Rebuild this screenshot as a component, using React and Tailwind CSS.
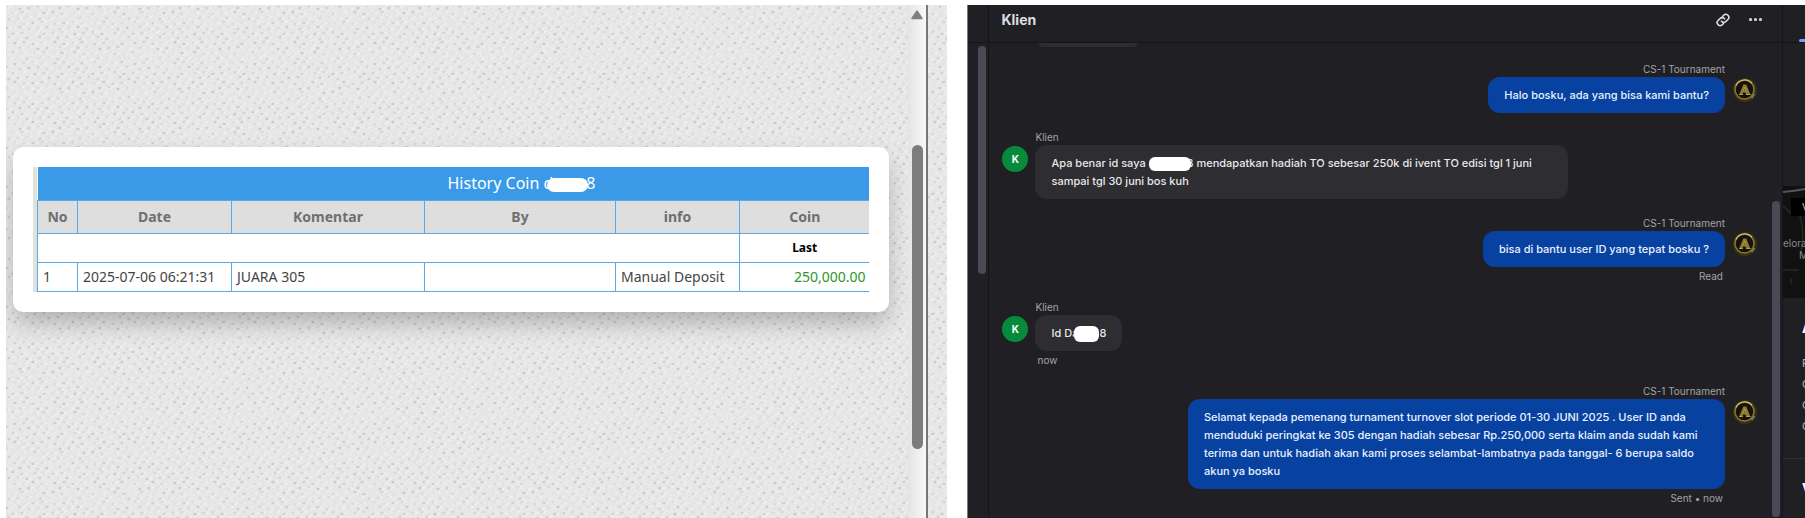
import { clsx } from "clsx";
import { Ellipsis } from "lucide-react";

const columns = ["No", "Date", "Komentar", "By", "info", "Coin"];

const messages = [
  {
    from: "agent",
    name: "CS-1 Tournament",
    body: "Halo bosku, ada yang bisa kami bantu?",
  },
  {
    from: "client",
    name: "Klien",
    body: (
      <>
        Apa benar id saya <Redacted className="w-[42px] h-[14px] -mr-1 rounded-md" />8 mendapatkan hadiah TO sebesar 250k di ivent TO edisi tgl 1 juni sampai tgl 30 juni bos kuh
      </>
    ),
  },
  {
    from: "agent",
    name: "CS-1 Tournament",
    body: "bisa di bantu user ID yang tepat bosku ?",
    status: "Read",
  },
  {
    from: "client",
    name: "Klien",
    body: (
      <>
        Id Da
        <Redacted className="w-[25px] h-4 -my-1 -ml-1 rounded-md" />8
      </>
    ),
    status: "now",
  },
  {
    from: "agent",
    name: "CS-1 Tournament",
    body: "Selamat kepada pemenang turnament turnover slot periode 01-30 JUNI 2025 . User ID anda menduduki peringkat ke 305 dengan hadiah sebesar Rp.250,000 serta klaim anda sudah kami terima dan untuk hadiah akan kami proses selambat-lambatnya pada tanggal- 6 berupa saldo akun ya bosku",
    status: "Sent • now",
  },
];

// uneven dots so the weave does not look printed
const weave = Array.from({ length: 288 }, (_, i) => {
  const row = Math.floor(i / 12);
  const col = i % 12;
  return {
    x: col * 10 + (row % 2) * 5 + ((i * 7 + row * 5) % 4),
    y: row * 5 + ((i * 5 + row) % 3),
    o: 0.1 + ((i * 37 + row * 23 + ((i * i) % 7)) % 10) / 16,
  };
});

function Redacted({ className }) {
  return <span className={clsx("relative inline-block bg-white align-middle", className)} />;
}

function Fabric() {
  return (
    <svg className="absolute inset-0 w-full h-full" aria-hidden="true">
      <defs>
        <filter id="grain" x="0" y="0" width="100%" height="100%">
          <feTurbulence type="fractalNoise" baseFrequency="0.35" numOctaves="2" seed="4" />
          <feColorMatrix type="matrix" values="0 0 0 0 0.5  0 0 0 0 0.5  0 0 0 0 0.5  0.9 0 0 0 -0.3" />
        </filter>
        <pattern id="weave" width="120" height="120" patternUnits="userSpaceOnUse">
          <rect width="120" height="120" fill="#e9e9e9" />
          {weave.map((d, i) => (
            <g key={i}>
              <path d={`M${d.x + 2} ${d.y + 3}l4 -2`} stroke="#f2f2f2" strokeWidth="1.5" />
              <ellipse cx={d.x + 1} cy={d.y + 2} rx="1.7" ry="1.3" fill="#bdbdbd" opacity={d.o} />
            </g>
          ))}
        </pattern>
      </defs>
      <rect width="100%" height="100%" fill="url(#weave)" />
      <rect width="100%" height="100%" filter="url(#grain)" opacity="0.3" />
    </svg>
  );
}

function HistoryTable() {
  return (
    <table className="w-full table-fixed border-collapse text-sm leading-5 text-[#444]">
      <colgroup>
        <col className="w-[40px]" />
        <col className="w-[154px]" />
        <col className="w-[193px]" />
        <col className="w-[191px]" />
        <col className="w-[124px]" />
        <col />
      </colgroup>
      <thead>
        <tr className="h-[33px] bg-[#3a9ae8] text-base text-white">
          <th colSpan={6} className="py-0 pr-0 pl-[136px] font-normal">
            History Coin d
            <Redacted className="w-[41px] h-[14px] -ml-1.5 -mr-0.5 rounded-full" />8
          </th>
        </tr>
        <tr className="h-[33px] bg-[#dedede] text-[#6f6f6f]">
          {columns.map((c) => (
            <th key={c} className="border border-r-0 border-[#5aa9e6] p-0 font-bold">{c}</th>
          ))}
        </tr>
      </thead>
      <tbody>
        <tr className="h-[29px]">
          <td colSpan={5} className="border border-[#5aa9e6]" />
          <td className="border border-r-0 border-[#5aa9e6] p-0 text-center text-xs font-bold text-black">Last</td>
        </tr>
        <tr className="h-[29px]">
          <td className="border border-[#5aa9e6] px-[5px] py-0">1</td>
          <td className="border border-[#5aa9e6] px-[5px] py-0 whitespace-nowrap">2025-07-06 06:21:31</td>
          <td className="border border-[#5aa9e6] px-[5px] py-0">JUARA 305</td>
          <td className="border border-[#5aa9e6] px-[5px] py-0" />
          <td className="border border-[#5aa9e6] px-[5px] py-0 whitespace-nowrap">Manual Deposit</td>
          <td className="border border-r-0 border-[#5aa9e6] px-1 py-0 text-right text-[#2c962c]">250,000.00</td>
        </tr>
      </tbody>
    </table>
  );
}

function CoinPanel() {
  return (
    <section className="relative flex flex-[942] min-w-0 overflow-hidden font-['Noto_Sans',sans-serif]">
      <Fabric />
      <div className="relative flex-1 min-w-0 pt-[142px] pl-[7px] pr-[19px]">
        <div className="rounded-[10px] bg-white pt-5 px-5 pb-5 shadow-[0_12px_24px_-2px_rgba(0,0,0,0.25)]">
          <div className="border-l-4 border-[#dfe1dd]">
            <HistoryTable />
          </div>
        </div>
      </div>

      {/* Scroll track */}
      <div className="relative flex w-5 flex-col items-center border-r-2 border-[#777] bg-linear-to-r from-[#e4e4e4] to-[#f8f8f8] pt-[5px]">
        <svg className="h-[10px] w-3" viewBox="0 0 12 10">
          <path d="M6 1L11 8.5H1Z" fill="#808080" stroke="#808080" strokeWidth="1.5" strokeLinejoin="round" />
        </svg>
        <div className="mt-[125px] h-[304px] w-[11px] rounded-full bg-[#7c7c7a]" />
      </div>
      <div className="w-[19px]" />
    </section>
  );
}

function AgentAvatar() {
  return (
    <svg className="mt-px h-6 w-6 shrink-0" viewBox="0 0 24 24" aria-hidden="true">
      <circle cx="12" cy="12" r="12" fill="#3a3212" />
      <circle cx="11.5" cy="11.5" r="9.5" fill="#14120e" stroke="#8a7830" strokeWidth="1.5" />
      <path d="M3 7.5A9.5 9.5 0 0 1 19 5.500" fill="none" stroke="#cbbb6a" strokeWidth="1.3" />
      <path d="M18.5 20l3 -4" stroke="#77775f" strokeWidth="1.8" />
      <path d="M6 17L10.3 6.500h3L17.500 17H13l-.5 -2.500H10L9.500 17Z" fill="#8d792f" />
      <path d="M6 16.500h4M13 16.500h4.500M11.800 9L10.500 13h2.500Z" fill="#14120e" stroke="#b39c48" strokeWidth="1" />
    </svg>
  );
}

function Message({ from, name, body, status }) {
  const agent = from === "agent";

  return (
    <li className={clsx("flex items-start", agent ? "flex-row-reverse gap-2" : "gap-[7px]", status ? "mb-[15px]" : "mb-[17px]")}>
      <div className="pt-[15px]">
        {agent ? (
          <AgentAvatar />
        ) : (
          <span className="mt-px flex h-[26px] w-[26px] items-center justify-center rounded-full bg-[#078a3b] text-[10px] font-bold text-white">K</span>
        )}
      </div>
      <div className={clsx("flex flex-col", agent ? "max-w-[537px] items-end" : "max-w-[533px] items-start")}>
        <p className="mb-px text-[10px] leading-[14px] text-[#a3a3aa]">{name}</p>
        <p
          className={clsx(
            "rounded-xl px-4 py-[9px] text-[11px] leading-[18px] font-medium",
            agent ? "bg-[#0842a0] text-[#eaf1ff]" : "bg-[#2e2d32] text-[#e8e8ea]"
          )}
        >
          {body}
        </p>
        {status && <p className="px-[2px] text-[10px] leading-[18px] text-[#a3a3aa]">{status}</p>}
      </div>
    </li>
  );
}

function Sidebar() {
  return (
    <aside className="w-[23px] shrink-0 overflow-hidden border-l border-[#151518] whitespace-nowrap">
      <div className="flex h-[38px] items-end justify-end border-b border-[#151518]">
        <span className="h-[3px] w-[6px] rounded-l-sm bg-[#6ea4f5]" />
      </div>
      {/* Map preview */}
      <div className="relative mt-[143px] h-[112px] bg-[#111112] text-[10px] leading-3 text-[#8b8b8e]">
        <svg className="absolute inset-0 h-full w-full" viewBox="0 0 22 112" fill="none">
          <path d="M0 6q12 -1 22 -3" stroke="#55555a" strokeWidth="2" />
          <path d="M0 20l9 8M17 30q5 18 1 34M0 84h16M8 92v6" stroke="#29292c" strokeWidth="1.5" />
        </svg>
        <span className="absolute top-3 left-2 h-[18px] bg-black pl-[11px] pr-4 leading-[18px] text-[#c9c9cc]">V</span>
        <p className="absolute top-[51px] left-0">elora</p>
        <p className="absolute top-[63px] left-4">M</p>
      </div>
      <div className="h-[161px] border-b border-[#303035] pt-5 pl-[19px] text-[11px] leading-[21px] text-[#b5b5ba]">
        <h3 className="mb-[15px] text-sm leading-5 font-bold text-white">A</h3>
        <p>F</p>
        <p>C</p>
        <p>C</p>
        <p>C</p>
      </div>
      <h3 className="pt-5 pl-[19px] text-sm leading-5 font-bold text-white">V</h3>
    </aside>
  );
}

function ChatPanel() {
  return (
    <section className="relative flex flex-[837] min-w-0 overflow-hidden border-l border-[#777] bg-[#202024] font-['Inter',sans-serif]">
      <div className="w-[21px] shrink-0 border-r border-[#151518]">
        <div className="h-[38px] border-b border-[#151518]" />
        <div className="mt-[3px] mr-[2px] ml-auto h-[228px] w-2 rounded-full bg-[#4a4a54]" />
      </div>

      <main className="relative flex-1 min-w-0">
        <header className="flex h-[38px] items-center justify-between border-b border-[#151518] pr-[18px] pl-3 pb-2 text-[#dedee2]">
          <h2 className="text-sm font-bold">Klien</h2>
          <div className="flex items-center gap-4">
            <button type="button" aria-label="Copy link">
              <svg className="h-4 w-4" viewBox="0 0 16 16" fill="none" stroke="currentColor" strokeWidth="1.6" strokeLinecap="round">
                <path d="M6.5 9.2a2.9 2.9 0 0 0 4.400 .3l2 -2a2.950 2.950 0 0 0 -4.200 -4.200l-1.200 1.200" />
                <path d="M9.5 6.8a2.9 2.9 0 0 0 -4.400 -.3l-2 2a2.950 2.950 0 0 0 4.200 4.200l1.200 -1.200" />
              </svg>
            </button>
            <button type="button" aria-label="More options">
              <Ellipsis size={17} strokeWidth={2.5} />
            </button>
          </div>
        </header>

        {/* tail of an older message */}
        <div className="ml-[50px] h-1 w-[98px] rounded-b-xl bg-[#2e2d32]" />

        <ul className="pt-[15px] pl-[13px] pr-[25px]">
          {messages.map((m, i) => (
            <Message key={i} {...m} />
          ))}
        </ul>

        <div className="absolute top-[196px] right-[2px] h-[316px] w-2 rounded-full bg-[#4a4a54]" />
      </main>

      <Sidebar />
    </section>
  );
}

export default function App() {
  return (
    <div className="flex h-screen min-h-[518px] gap-5 overflow-hidden bg-white pt-[5px] pl-[6px]">
      <CoinPanel />
      <ChatPanel />
    </div>
  );
}
